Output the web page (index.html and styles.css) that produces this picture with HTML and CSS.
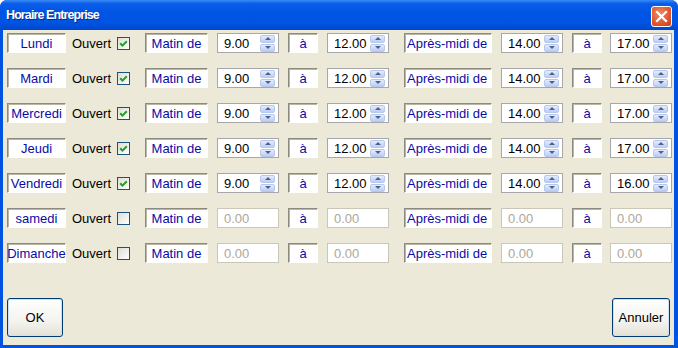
FILE: index.html
```html
<!DOCTYPE html>
<html lang="fr">
<head>
    <meta charset="UTF-8">
    <title>Horaire Entreprise</title>
    <link rel="stylesheet" href="styles.css">
</head>
<body>
    <div class="window">
        <div class="titlebar">
            <span class="title">Horaire Entreprise</span>
            <span class="close">
                <svg width="13" height="13" viewBox="0 0 13 13">
                    <path d="M2 2 L11 11 M11 2 L2 11" stroke="#fff" stroke-width="2.2" stroke-linecap="square"/>
                </svg>
            </span>
        </div>

        <div class="client">
            <div class="rows" id="rows"></div>

            <div class="buttons">
                <button class="btn btn-ok">OK</button>
                <button class="btn btn-cancel">Annuler</button>
            </div>
        </div>
    </div>

    <script>
        // one row per day: name, open?, morning from/to, afternoon from/to
        const days = [
            ['Lundi', true, '9.00', '12.00', '14.00', '17.00'],
            ['Mardi', true, '9.00', '12.00', '14.00', '17.00'],
            ['Mercredi', true, '9.00', '12.00', '14.00', '17.00'],
            ['Jeudi', true, '9.00', '12.00', '14.00', '17.00'],
            ['Vendredi', true, '9.00', '12.00', '14.00', '16.00'],
            ['samedi', false, '0.00', '0.00', '0.00', '0.00'],
            ['Dimanche', false, '0.00', '0.00', '0.00', '0.00']
        ];

        function spinner(value, open) {
            if (!open) {
                return '<div class="spin off"><span class="val">' + value + '</span></div>';
            }
            return '<div class="spin"><span class="val">' + value + '</span>' +
                '<span class="arrows"><i class="up"></i><i class="down"></i></span></div>';
        }

        const check = '<svg width="11" height="11" viewBox="0 0 11 11"><path d="M2.2 5.2 L4.5 7.6 L8.8 3.2" fill="none" stroke="#21a121" stroke-width="2"/></svg>';

        let html = '';
        days.forEach(function(d) {
            html += '<div class="row">' +
                '<span class="label day">' + d[0] + '</span>' +
                '<span class="ouvert">Ouvert</span>' +
                '<span class="checkbox">' + (d[1] ? check : '') + '</span>' +
                '<span class="label matin">Matin de</span>' +
                spinner(d[2], d[1]) +
                '<span class="label a">à</span>' +
                spinner(d[3], d[1]) +
                '<span class="label apres">Après-midi de</span>' +
                spinner(d[4], d[1]) +
                '<span class="label a">à</span>' +
                spinner(d[5], d[1]) +
                '</div>';
        });
        document.getElementById('rows').innerHTML = html;
    </script>
</body>
</html>
```

FILE: styles.css
```css
* {
    margin: 0;
    padding: 0;
    box-sizing: border-box;
}

body {
    font-family: "Liberation Sans", Arial, sans-serif;
    font-size: 13px;
    background-color: #ffffff;
}

.window {
    width: 678px;
    height: 348px;
    display: flex;
    flex-direction: column;
    background-color: #0052e0;
    border-radius: 7px 7px 0 0;
    overflow: hidden;
}

.titlebar {
    height: 30px;
    display: flex;
    align-items: center;
    justify-content: space-between;
    padding: 0 6px 0 6px;
    background: linear-gradient(#3b8cf7 0%, #0a5de8 12%, #0055e5 40%, #0054e2 75%, #0047cf 100%);
}

.title {
    color: #ffffff;
    font-weight: bold;
    font-size: 12.5px;
    letter-spacing: -0.9px;
    text-shadow: 1px 1px 0 #0a2a8a;
}

.close {
    width: 21px;
    height: 21px;
    margin-top: 2px;
    border: 1px solid #ffffff;
    border-radius: 3px;
    display: flex;
    align-items: center;
    justify-content: center;
    background: radial-gradient(circle at 40% 35%, #f08a62 0%, #e15a32 55%, #c43e18 100%);
}

.client {
    flex: 1;
    margin: 0 4px 3px 3px;
    padding: 3px 0 0 4px;
    background-color: #ece9d8;
    display: flex;
    flex-direction: column;
}

.rows {
    display: flex;
    flex-direction: column;
    gap: 15px;
}

.row {
    height: 20px;
    display: flex;
    align-items: center;
}

.row > * {
    flex-shrink: 0;
}

.label {
    height: 20px;
    display: flex;
    align-items: center;
    justify-content: center;
    background-color: #ffffff;
    color: #0a0aa6;
    border: 1px solid;
    border-color: #8d8b7f #ffffff #ffffff #8d8b7f;
    box-shadow: inset 1px 1px 0 #b9b6a8;
    white-space: nowrap;
}

.day {
    width: 59px;
}

.ouvert {
    width: 40px;
    margin-left: 6px;
    color: #000000;
}

.checkbox {
    width: 13px;
    height: 13px;
    margin-left: 5px;
    border: 1px solid #1c5180;
    background: linear-gradient(135deg, #dcdcd7, #ffffff);
    display: flex;
    align-items: center;
    justify-content: center;
}

.matin {
    width: 63px;
    margin-left: 15px;
}

.a {
    width: 30px;
    margin-left: 9px;
}

.apres {
    width: 88px;
    margin-left: 15px;
    justify-content: flex-start;
    padding-left: 2px;
}

.spin {
    width: 62px;
    height: 20px;
    margin-left: 9px;
    display: flex;
    align-items: center;
    justify-content: space-between;
    padding: 0 3px 0 6px;
    background-color: #ffffff;
    border: 1px solid #a7a6aa;
    color: #000000;
}

.row > .spin:last-child {
    margin-left: 8px;
}

.spin.off {
    border-color: #c9c7ba;
    color: #aca899;
}

.arrows {
    display: flex;
    flex-direction: column;
    gap: 1px;
}

.arrows i {
    width: 15px;
    height: 8px;
    border: 1px solid #b7c8ef;
    border-radius: 2px;
    background: linear-gradient(#e4ecfd, #bccdf5);
    display: flex;
    align-items: center;
    justify-content: center;
}

.arrows i::after {
    content: '';
    border-left: 3px solid transparent;
    border-right: 3px solid transparent;
}

.arrows .up::after {
    border-bottom: 3px solid #4d6185;
}

.arrows .down::after {
    border-top: 3px solid #4d6185;
}

.buttons {
    margin-top: 35px;
    margin-right: 4px;
    display: flex;
    justify-content: space-between;
}

.btn {
    height: 39px;
    font-family: "Liberation Sans", Arial, sans-serif;
    font-size: 13px;
    color: #000000;
    border: 1px solid #003c74;
    border-radius: 3px;
    background: linear-gradient(#ffffff 0%, #f4f3ee 60%, #e3e0d5 100%);
    box-shadow: inset 0 0 0 1px #cde0f9;
}

.btn-ok {
    width: 56px;
}

.btn-cancel {
    width: 58px;
}
```
